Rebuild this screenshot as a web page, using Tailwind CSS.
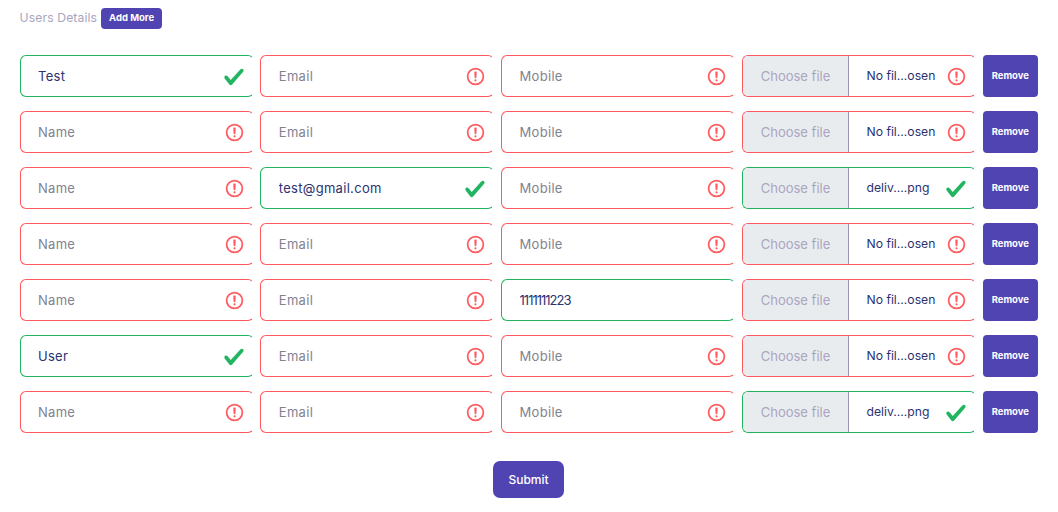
<!DOCTYPE html>
<html lang="en">

<head>
    <meta charset="UTF-8">
    <meta name="viewport" content="width=device-width, initial-scale=1.0">
    <title>Users Details</title>
    <script src="https://cdn.jsdelivr.net/npm/@tailwindcss/browser@4"></script>
</head>

<body class="bg-white font-['Inter',sans-serif] text-[13px] text-[#2b3270]">
    <form class="pl-[19.6px] pt-[8px]">
        <div class="flex items-center h-[21px]">
            <span class="text-[#a9a5bf] text-[12.2px] tracking-[0.1px]">Users Details</span>
            <button type="button" class="ml-[4px] w-[61px] h-[21px] rounded-[4px] bg-[#4f44b2] text-white text-[9.5px] font-bold">Add More</button>
        </div>

        <div id="rows" class="mt-[26px] grid grid-cols-[234px_234px_234px_234px_55px] gap-x-[6.8px] gap-y-[14px]"></div>

        <div class="mt-[28px] ml-[473.4px]">
            <button type="submit" class="w-[71px] h-[37px] rounded-[7px] bg-[#4f44b2] text-white text-[12px] font-medium">Submit</button>
        </div>
    </form>

    <script>
        const okIcon = `<svg class="w-[22px] h-[22px] fill-[#22b561]" viewBox="0 0 8 8"><path d="M2.3 6.73.6 4.53c-.4-1.04.46-1.4 1.1-.8l1.1 1.4 3.4-3.8c.6-.63 1.6-.27 1.2.7l-4 4.6c-.43.5-.8.4-1.1.1z"/></svg>`;
        const badIcon = `<svg class="w-[21px] h-[21px] fill-none stroke-[#ff5a5f]" viewBox="0 0 12 12"><circle cx="6" cy="6" r="4.5"/><path stroke-linejoin="round" d="M5.8 3.6h.4L6 6.5z"/><circle cx="6" cy="8.2" r=".6" class="fill-[#ff5a5f] stroke-none"/></svg>`;

        function textField(placeholder, value, noIcon) {
            const border = value ? "border-[#22b561]" : "border-[#ff5a5f]";
            const icon = noIcon ? "" : (value ? okIcon : badIcon);
            const spacing = noIcon ? "tracking-[-1px]" : "tracking-[0.3px]";
            return `
          <div class="relative h-[42px] rounded-[6px] border border-r-transparent bg-white ${border}">
            <input type="text" placeholder="${placeholder}" value="${value}" class="w-full h-full pl-[17.4px] pr-[40px] bg-transparent outline-none placeholder:text-[#7f8290] ${spacing}" />
            <span class="absolute right-[7.6px] top-[10px]">${icon}</span>
          </div>`;
        }

        function fileField(fileName) {
            const border = fileName ? "border-[#22b561]" : "border-[#ff5a5f]";
            return `
          <div class="flex items-center h-[42px] rounded-[6px] border border-r-transparent overflow-hidden ${border}">
            <span class="w-[106px] h-full pt-[1px] flex items-center justify-center bg-[#e9ecef] text-[#a9a5bf] border-r border-r-[#9a93b5]">Choose file</span>
            <span class="pl-[17.5px] pt-[1px] flex-1 text-[12.2px]">${fileName || "No fil...osen"}</span>
            <span class="mr-[8px] mt-[1px]">${fileName ? okIcon : badIcon}</span>
          </div>`;
        }

        const users = [
            { name: "Test", email: "", mobile: "", file: "" },
            { name: "", email: "", mobile: "", file: "" },
            { name: "", email: "test@gmail.com", mobile: "", file: "deliv....png" },
            { name: "", email: "", mobile: "", file: "" },
            { name: "", email: "", mobile: "1111111223", file: "" },
            { name: "User", email: "", mobile: "", file: "" },
            { name: "", email: "", mobile: "", file: "deliv....png" },
        ];

        document.getElementById("rows").innerHTML = users.map((user) => `
          ${textField("Name", user.name)}
          ${textField("Email", user.email)}
          ${textField("Mobile", user.mobile, !!user.mobile)}
          ${fileField(user.file)}
          <button type="button" class="h-[42px] rounded-[4px] bg-[#4f44b2] text-white text-[9.5px] font-bold">Remove</button>
        `).join("");
    </script>
</body>

</html>
